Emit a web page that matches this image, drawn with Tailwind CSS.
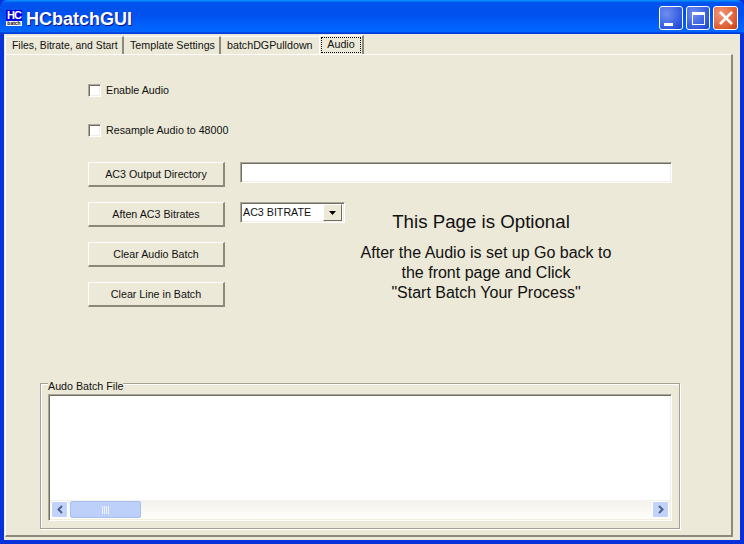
<!DOCTYPE html>
<html lang="en">
  <head>
    <meta charset="UTF-8" />
    <title>HCbatchGUI</title>
    <script src="https://cdn.jsdelivr.net/npm/@tailwindcss/browser@4"></script>
  </head>
  <body class="w-[744px] h-[544px] overflow-hidden bg-[#0831d9] font-['Liberation_Sans',sans-serif] text-[10.7px] text-[#111] whitespace-nowrap">
    <div class="flex flex-col h-full">
      <!-- Title bar -->
      <div class="h-[34px] shrink-0 flex items-center pl-[6px] pr-[6px] rounded-t-[7px] bg-[linear-gradient(180deg,#0997ff,#0053ee_8%,#0050ee_40%,#0066ff_88%,#0066ff_93%,#005bff_95%,#003dd7_96%,#003dd7)]">
        <div class="w-[16px] h-[16px] flex flex-col items-center bg-white overflow-hidden mt-[2px]">
          <div class="w-full h-[11px] bg-[#0000e0] text-white text-[11px] leading-[11px] font-bold text-center tracking-[-1px]">HC</div>
          <div class="w-full h-[5px] bg-white text-black text-[5px] leading-[5px] font-bold text-center">batch</div>
        </div>
        <div class="ml-[4px] mt-[4px] text-white text-[18px] font-bold [text-shadow:1px_1px_0_#0f1089]">HCbatchGUI</div>
        <div class="ml-auto flex gap-[3px] mt-[2px]">
          <div class="w-[24px] h-[24px] rounded-[3px] border border-white bg-[radial-gradient(circle_at_30%_30%,#6f8ff0,#2a55dc_75%,#1b3fc0)] relative">
            <div class="absolute left-[4px] top-[16px] w-[9px] h-[3px] bg-white"></div>
          </div>
          <div class="w-[24px] h-[24px] rounded-[3px] border border-white bg-[radial-gradient(circle_at_30%_30%,#6f8ff0,#2a55dc_75%,#1b3fc0)] flex items-center justify-center">
            <div class="w-[13px] h-[13px] border border-white border-t-[3px]"></div>
          </div>
          <div class="w-[25px] h-[24px] rounded-[3px] border border-white bg-[radial-gradient(circle_at_30%_30%,#f09a78,#dd5a30_70%,#c03a12)] flex items-center justify-center">
            <svg width="16" height="16" viewBox="0 0 16 16"><path d="M2 2 L14 14 M14 2 L2 14" stroke="#fff" stroke-width="2.6"/></svg>
          </div>
        </div>
      </div>

      <!-- Client area -->
      <div class="flex-1 min-h-0 mx-[4px] mb-[4px] bg-[#ece9d8] flex flex-col pl-[1px] pr-[7px] pb-[3px]">
        <!-- Tabs -->
        <div class="h-[20px] shrink-0 flex items-stretch">
          <div class="w-[119px] mt-[2px] flex items-center pl-[6px] text-[10.4px] border-l border-t border-white border-r-2 border-r-[#8d8a7d]">Files, Bitrate, and Start</div>
          <div class="w-[97px] mt-[2px] flex items-center pl-[6px] border-t border-white border-r-2 border-r-[#8d8a7d]">Template Settings</div>
          <div class="w-[98px] mt-[2px] flex items-center pl-[6px] border-t border-white">batchDGPulldown</div>
          <div class="w-[45px] mt-[1px] pt-[1px] px-[1px] border-l border-t border-white border-r-2 border-r-[#8d8a7d]">
            <div class="h-[16px] leading-[13px] border border-dotted border-black text-center">Audio</div>
          </div>
        </div>

        <!-- Page -->
        <div class="flex-1 min-h-0 flex flex-col border-t border-l border-white border-r-2 border-b-2 border-r-[#8d8a7d] border-b-[#8d8a7d] pl-[82px] pt-[29px] pr-[59px]">
          <label class="h-[13px] flex items-center">
            <span class="w-[13px] h-[13px] bg-white border border-[#aca899] border-r-white border-b-white shadow-[inset_1px_1px_0_#716f64,inset_-1px_-1px_0_#f1efe2]"></span>
            <span class="ml-[5px]">Enable Audio</span>
          </label>
          <label class="h-[13px] mt-[27px] flex items-center">
            <span class="w-[13px] h-[13px] bg-white border border-[#aca899] border-r-white border-b-white shadow-[inset_1px_1px_0_#716f64,inset_-1px_-1px_0_#f1efe2]"></span>
            <span class="ml-[5px]">Resample Audio to 48000</span>
          </label>

          <div class="flex mt-[25px] gap-[15px]">
            <div class="w-[137px] flex flex-col gap-[15px]">
              <div class="h-[25px] flex items-center justify-center border border-white border-r-2 border-b-2 border-r-[#8d8a7d] border-b-[#8d8a7d]">AC3 Output Directory</div>
              <div class="h-[25px] flex items-center justify-center border border-white border-r-2 border-b-2 border-r-[#8d8a7d] border-b-[#8d8a7d]">Aften AC3 Bitrates</div>
              <div class="h-[25px] flex items-center justify-center border border-white border-r-2 border-b-2 border-r-[#8d8a7d] border-b-[#8d8a7d]">Clear Audio Batch</div>
              <div class="h-[25px] flex items-center justify-center border border-white border-r-2 border-b-2 border-r-[#8d8a7d] border-b-[#8d8a7d]">Clear Line in Batch</div>
            </div>
            <div class="flex-1 min-w-0">
              <div class="h-[21px] bg-white border border-[#aca899] border-r-white border-b-white shadow-[inset_1px_1px_0_#716f64,inset_-1px_-1px_0_#f1efe2]"></div>
              <div class="mt-[19px] flex">
                <div class="w-[105px] h-[21px] shrink-0 flex items-center bg-white border border-[#aca899] border-r-white border-b-white shadow-[inset_1px_1px_0_#716f64,inset_-1px_-1px_0_#f1efe2] pl-[2px] pr-[2px]">
                  <span class="flex-1">AC3 BITRATE</span>
                  <span class="w-[19px] h-[17px] bg-[#ece9d8] border border-white border-r-[#716f64] border-b-[#716f64] flex items-center justify-center">
                    <svg width="7" height="4" viewBox="0 0 7 4"><path d="M0 0H7L3.5 4Z" fill="#000"/></svg>
                  </span>
                </div>
              </div>
              <div class="mt-[-12px] pl-[60px] text-center text-[16px] leading-[20px]">
                <div class="text-[18.7px] leading-[22px] mr-[10px]">This Page is Optional</div>
                <div class="mt-[10px]">After the Audio is set up Go back to</div>
                <div>the front page and Click</div>
                <div>"Start Batch Your Process"</div>
              </div>
            </div>
          </div>

          <!-- Batch file group -->
          <div class="relative mt-auto mb-[6px] ml-[-48px] mr-[-8px] h-[146px] border border-[#a5a294] shadow-[1px_1px_0_#fff,inset_1px_1px_0_#fff] px-[7px] pt-[10px] pb-[7px]">
            <span class="absolute left-[7px] top-[-4px] bg-[#ece9d8] leading-[12px]">Audo Batch File</span>
            <div class="h-full flex flex-col bg-white border border-[#aca899] border-r-white border-b-white shadow-[inset_1px_1px_0_#716f64,inset_-1px_-1px_0_#f1efe2] p-[1px]">
              <div class="flex-1"></div>
              <div class="h-[19px] flex items-stretch bg-[linear-gradient(180deg,#f3f1ec,#fefefa)]">
                <div class="w-[17px] m-[1px] rounded-[2px] bg-[#c1d3fb] border border-white flex items-center justify-center">
                  <svg width="8" height="9" viewBox="0 0 8 9"><path d="M6 1L2.5 4.5L6 8" fill="none" stroke="#4d6185" stroke-width="2"/></svg>
                </div>
                <div class="w-[71px] m-[1px] rounded-[2px] bg-[#bcd0fa] border border-[#a5bfef] flex items-center justify-center">
                  <svg width="8" height="8" viewBox="0 0 8 8"><path d="M.5 0V8M2.5 0V8M4.5 0V8M6.5 0V8" stroke="#eef4fe"/></svg>
                </div>
                <div class="flex-1"></div>
                <div class="w-[17px] m-[1px] rounded-[2px] bg-[#c1d3fb] border border-white flex items-center justify-center">
                  <svg width="8" height="9" viewBox="0 0 8 9"><path d="M2 1L5.5 4.5L2 8" fill="none" stroke="#4d6185" stroke-width="2"/></svg>
                </div>
              </div>
            </div>
          </div>
        </div>
      </div>
    </div>
  </body>
</html>
